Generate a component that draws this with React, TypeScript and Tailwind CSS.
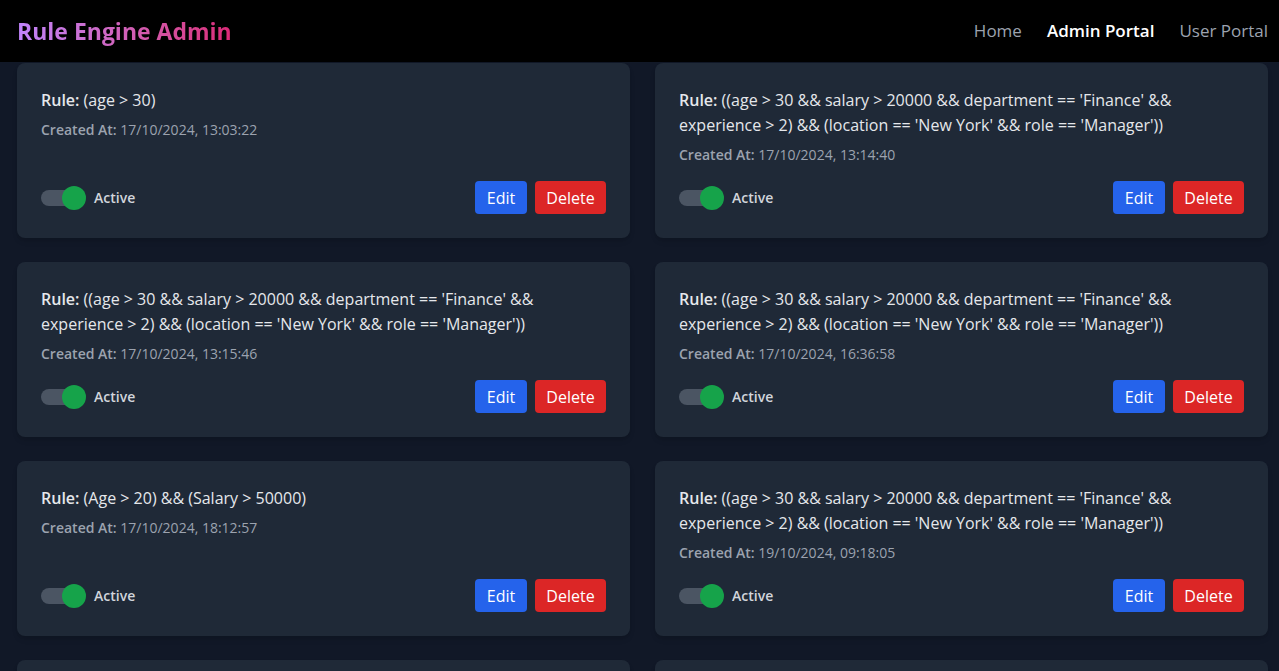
import { useState } from "react";

type Rule = { id: number; expression: string; createdAt: string };

const LONG_RULE =
  "((age > 30 && salary > 20000 && department == 'Finance' && experience > 2) && (location == 'New York' && role == 'Manager'))";

const RULES: Rule[] = [
  { id: 1, expression: "(age > 30)", createdAt: "17/10/2024, 13:03:22" },
  { id: 2, expression: LONG_RULE, createdAt: "17/10/2024, 13:14:40" },
  { id: 3, expression: LONG_RULE, createdAt: "17/10/2024, 13:15:46" },
  { id: 4, expression: LONG_RULE, createdAt: "17/10/2024, 16:36:58" },
  { id: 5, expression: "(Age > 20) && (Salary > 50000)", createdAt: "17/10/2024, 18:12:57" },
  { id: 6, expression: LONG_RULE, createdAt: "19/10/2024, 09:18:05" },
];

function Header() {
  return (
    <header className="flex h-[62px] shrink-0 items-center justify-between bg-black pl-[17px] pr-[11px]">
      <h1 className="bg-linear-to-r from-[#c084fc] to-[#db2777] bg-clip-text text-[23px] leading-8 font-bold text-transparent">
        Rule Engine Admin
      </h1>
      <nav className="flex items-center gap-[25px] text-[17px] leading-7">
        <a href="#home" className="text-[#9ca3af]">Home</a>
        <a href="#admin" aria-current="page" className="font-semibold text-white">Admin Portal</a>
        <a href="#user" className="text-[#9ca3af]">User Portal</a>
      </nav>
    </header>
  );
}

function Toggle({ id }: { id: number }) {
  const [active, setActive] = useState(true);
  return (
    <label htmlFor={`rule-${id}`} className="flex cursor-pointer items-center">
      <span className="relative block h-4 w-[41px] rounded-full bg-[#4b5563]">
        <input
          id={`rule-${id}`}
          type="checkbox"
          role="switch"
          className="peer sr-only"
          checked={active}
          onChange={(e) => setActive(e.target.checked)}
        />
        <span className="absolute -top-1 left-0 size-6 rounded-full bg-[#dc2626] peer-checked:-right-1 peer-checked:left-auto peer-checked:bg-[#16a34a]" />
      </span>
      <span className="ml-3 text-[14px] leading-5 font-semibold text-[#d1d5db]">
        {active ? "Active" : "Inactive"}
      </span>
    </label>
  );
}

function RuleCard({ rule }: { rule: Rule }) {
  return (
    <article className="flex flex-col justify-between rounded-lg bg-[#1f2937] px-6 pt-[25px] pb-6 shadow-md">
      <div>
        <p className="text-[16px] leading-[25px] text-[#e5e7eb]">
          <strong className="font-semibold">Rule:</strong> {rule.expression}
        </p>
        <p className="mt-[7px] text-[14px] leading-5 text-[#9ca3af]">
          <strong className="font-semibold">Created At:</strong> {rule.createdAt}
        </p>
      </div>
      <div className="mt-4 flex items-center justify-between">
        <Toggle id={rule.id} />
        <div className="flex gap-2 text-[16px] leading-8 text-white">
          <button type="button" className="w-[52px] rounded bg-[#2563eb] pt-px">Edit</button>
          <button type="button" className="w-[71px] rounded bg-[#dc2626] pt-px">Delete</button>
        </div>
      </div>
    </article>
  );
}

export default function App() {
  return (
    <div className="flex h-screen flex-col overflow-hidden bg-[#111827] font-['Open_Sans','Noto_Sans',sans-serif]">
      <Header />
      <main className="grid grid-cols-2 gap-x-[25px] gap-y-6 pt-px pr-[11px] pl-[17px]">
        {RULES.map((rule) => (
          <RuleCard key={rule.id} rule={rule} />
        ))}
        <div className="h-24 rounded-lg bg-[#1f2937] shadow-md" />
        <div className="h-24 rounded-lg bg-[#1f2937] shadow-md" />
      </main>
    </div>
  );
}
